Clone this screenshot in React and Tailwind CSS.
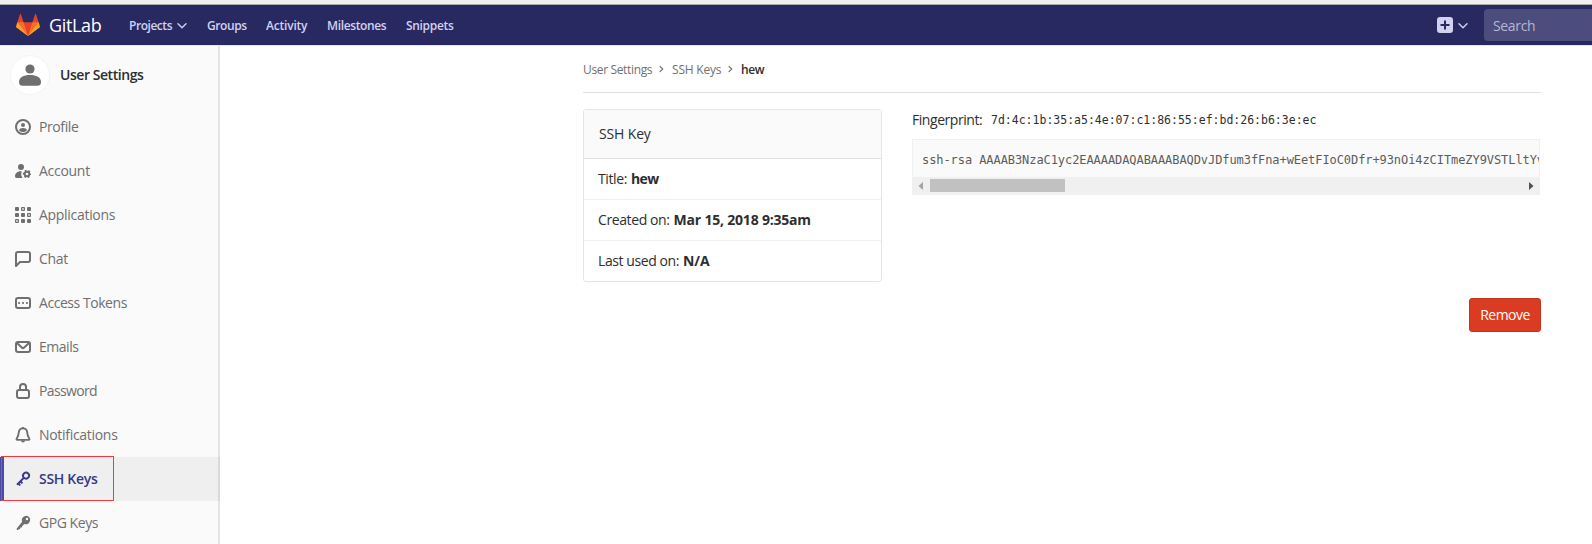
const Icon = ({ children, className = "size-4" }) => (
  <svg viewBox="0 0 16 16" className={`shrink-0 ${className}`} fill="currentColor">
    {children}
  </svg>
);

const line = { fill: "none", stroke: "currentColor", strokeWidth: 2, strokeLinejoin: "round", strokeLinecap: "round" };

const ProfileIcon = () => (
  <Icon>
    <circle cx="8" cy="8" r="7" fill="none" stroke="currentColor" strokeWidth="2" />
    <circle cx="8" cy="6" r="2" />
    <path d="M4 11.200C4.300 9.800 6 9 8 9s3.700.8 4 2.200C11.200 12.400 9.600 13 8 13s-3.200-.6-4-1.800z" />
  </Icon>
);

const AccountIcon = () => (
  <Icon>
    <circle cx="6" cy="4" r="3" />
    <path d="M6.800 8.500C5.900 8.100 4.600 8 3.700 8.400 1.500 9.100 0 10.800 0 13c0 1.500.6 2 2 2h5.600c-.9-1.200-1.500-2.600-1.400-4 .1-1 .3-1.700.6-2.500z" />
    <circle cx="12" cy="11" r="2.300" fill="none" stroke="currentColor" strokeWidth="1.900" />
    <circle cx="12" cy="11" r="3.500" fill="none" stroke="currentColor" strokeWidth="1.400" strokeDasharray="1.830 1.830" strokeDashoffset=".9" />
  </Icon>
);

const ApplicationsIcon = () => (
  <Icon>
    {[0, 1, 2].map((r) =>
      [0, 1, 2].map((c) =>
        [1, 5, 6].includes(r * 3 + c) ? (
          <rect key={c} x={c * 6 + 0.6} y={r * 6 + 0.6} width="2.800" height="2.800" rx=".4" fill="none" stroke="currentColor" strokeWidth="1.200" />
        ) : (
          <rect key={c} x={c * 6} y={r * 6} width="4" height="4" rx="1" />
        )
      )
    )}
  </Icon>
);

const ChatIcon = () => (
  <Icon>
    <path {...line} d="M3 1h10a2 2 0 0 1 2 2v6a2 2 0 0 1-2 2H5l-4 4V3a2 2 0 0 1 2-2z" />
  </Icon>
);

const TokenIcon = () => (
  <Icon>
    <rect {...line} x="1" y="3" width="14" height="10" rx="2" />
    <rect x="3.200" y="7.100" width="1.800" height="1.800" />
    <rect x="7.100" y="7.100" width="1.800" height="1.800" />
    <rect x="11" y="7.100" width="1.800" height="1.800" />
  </Icon>
);

const EmailIcon = () => (
  <Icon>
    <rect {...line} x="1" y="3" width="14" height="10" rx="2" />
    <path {...line} d="M2.500 4.500L6.800 8.500a1.700 1.700 0 0 0 2.400 0L13.500 4.500" />
  </Icon>
);

const LockIcon = () => (
  <Icon>
    <rect {...line} x="2" y="7" width="12" height="8" rx="2" />
    <path {...line} strokeLinecap="butt" d="M5 7V4a3 3 0 0 1 6 0v3" />
  </Icon>
);

const BellIcon = () => (
  <Icon>
    <path {...line} strokeWidth="1.900" d="M8 1.400c-2.400 0-4 1.700-4.200 3.900C3.600 8.400 3.200 9.600 1.700 11.700c-.4.600-.2 1.200.5 1.200h11.600c.7 0 .9-.6.5-1.200-1.500-2.100-1.900-3.300-2.100-6.400C12 3.100 10.400 1.400 8 1.400z" />
    <path d="M6 13.500h4a2 2 0 0 1-4 0zM7 0h2v2H7z" />
  </Icon>
);

const KeyIcon = () => (
  <Icon>
    <path d="M7.575 6.689a4.002 4.002 0 0 1 6.274-4.860 4 4 0 0 1-4.860 6.274l-2.210 2.210.706.708a1 1 0 1 1-1.414 1.414l-.707-.707-.707.707.707.707a1 1 0 1 1-1.414 1.414l-.707-.707a1 1 0 0 1-1.414-1.414l5.746-5.746zm2.032-.618a2 2 0 1 0 2.828-2.828A2 2 0 0 0 9.607 6.070z" />
  </Icon>
);

const SolidKeyIcon = () => (
  <Icon>
    <path fillRule="evenodd" d="M7.100 6.700A4.200 4.200 0 1 1 9.300 8.900L7.100 11.200l-.3 1.200-1.500.2-.2 1.400-1.300.3-.9.600c-.9.300-1.700-.6-1.100-1.500zM12 5.200a1.200 1.200 0 1 0 0-2.400 1.200 1.200 0 0 0 0 2.400z" />
  </Icon>
);

const Chevron = () => (
  <svg viewBox="0 0 10 6" className="h-1.5 w-2.5" {...line} strokeWidth="1.400">
    <path d="M1 .8l4 4 4-4" />
  </svg>
);

const CrumbArrow = ({ className }) => (
  <svg viewBox="0 0 5 8" className={`mb-0.5 h-2 w-[5px] ${className}`} {...line} strokeWidth="1.200">
    <path d="M1 1.300l2.700 2.700L1 6.700" />
  </svg>
);

const Logo = () => (
  <svg viewBox="0 0 36 36" className="size-6">
    <path fill="#e24329" d="M2 14l9.380 9v-9l-4-12.280c-.205-.632-1.176-.632-1.380 0z" />
    <path fill="#e24329" d="M34 14l-9.380 9v-9l4-12.280c.205-.632 1.176-.632 1.380 0z" />
    <path fill="#e24329" d="M18 34.380L3 14h30z" />
    <path fill="#fc6d26" d="M18 34.380L11.380 14H2l4 11z" />
    <path fill="#fc6d26" d="M18 34.380L24.620 14H34l-4 11z" />
    <path fill="#fca326" d="M2 14L.1 20.160c-.18.565 0 1.200.5 1.560l17.420 12.660z" />
    <path fill="#fca326" d="M34 14l1.900 6.160c.18.565 0 1.200-.5 1.560L18 34.380z" />
  </svg>
);

const items = [
  ["Profile", ProfileIcon, "tracking-[-0.4px]"],
  ["Account", AccountIcon, "tracking-[-0.28px]"],
  ["Applications", ApplicationsIcon, "tracking-[-0.3px]"],
  ["Chat", ChatIcon, "tracking-[-0.3px]"],
  ["Access Tokens", TokenIcon, "tracking-[-0.45px]"],
  ["Emails", EmailIcon, "tracking-[-0.48px]"],
  ["Password", LockIcon, "tracking-[-0.65px]"],
  ["Notifications", BellIcon, "tracking-[-0.3px]"],
  ["SSH Keys", KeyIcon, "tracking-[-0.3px]"],
  ["GPG Keys", SolidKeyIcon, "tracking-[-0.45px]"],
];

const Navbar = () => (
  <header className="flex h-[41px] shrink-0 items-center border-b border-[#e5e5e5] bg-[#292961] pl-4 text-[#d1d1f0]">
    <Logo />
    <span className="ml-[9px] w-20 text-[18px] leading-6 tracking-[-0.36px] text-white">GitLab</span>
    <nav className="flex items-center pt-0.5 text-xs font-semibold">
      <span className="w-12 tracking-[-0.46px]">Projects</span>
      <span className="w-[30px]"><Chevron /></span>
      <span className="w-[59px] tracking-[-0.4px]">Groups</span>
      <span className="w-[61px] tracking-[-0.2px]">Activity</span>
      <span className="w-[79px] tracking-[-0.36px]">Milestones</span>
      <span className="tracking-[-0.32px]">Snippets</span>
    </nav>
    <div className="ml-auto flex items-center">
      <Icon>
        <path fillRule="evenodd" d="M3 0h10a3 3 0 0 1 3 3v10a3 3 0 0 1-3 3H3a3 3 0 0 1-3-3V3a3 3 0 0 1 3-3zm4 3.500V7H3.500v2H7v3.500h2V9h3.500V7H9V3.500z" />
      </Icon>
      <span className="mr-4 ml-[5px] pt-0.5"><Chevron /></span>
      <div className="flex h-8 w-[108px] items-center rounded-l bg-[#4c4c7d] pt-0.5 pl-[9px] text-sm tracking-[-0.35px] text-[#b5b5d6]">Search</div>
    </div>
  </header>
);

const Sidebar = () => (
  <aside className="relative flex w-[220px] shrink-0 flex-col overflow-hidden bg-[#fafafa] text-[#6f6f6f] shadow-[inset_-2px_0_0_#e4e4e4]">
    <div className="flex h-[59px] shrink-0 items-center pb-0.5 pl-2.5">
      <div className="flex size-10 items-center justify-center rounded-full border border-[#f4f4f4] bg-white">
        <svg viewBox="0 0 22 22" className="size-[22px]" fill="currentColor">
          <circle cx="11" cy="5" r="4.600" />
          <path d="M0 18c0-4.500 4.500-7 11-7s11 2.500 11 7c0 2.800-1.500 3.700-3.500 3.700h-15C1.500 21.700 0 20.800 0 18z" />
        </svg>
      </div>
      <span className="ml-2.5 text-sm font-semibold tracking-[-0.45px] text-[#2e2e2e]">User Settings</span>
    </div>
    <ul>
      {items.map(([label, Glyph, tracking]) => {
        const active = label === "SSH Keys";
        return (
          <li key={label} className={`flex h-11 items-center pl-[15px] text-sm ${active ? "bg-[#efefef] font-semibold text-[#393982] shadow-[inset_4px_0_0_#4b4ba3,inset_-2px_0_0_#dadada]" : ""}`}>
            <Glyph />
            <span className={`ml-2 ${tracking}`}>{label}</span>
          </li>
        );
      })}
    </ul>
    <div className="absolute top-[410px] left-px h-[45px] w-[113px] border border-[#f8383d]" />
  </aside>
);

const Row = ({ label, value, labelClass, valueClass }) => (
  <div className="flex h-[41px] items-center border-b border-[#f0f0f0] px-[15px] last:h-10 last:border-0">
    <span className={labelClass}>{label}</span>
    <b className={`ml-1 font-bold ${valueClass}`}>{value}</b>
  </div>
);

const Content = () => (
  <main className="flex w-[1372px] flex-col pr-[51px] pl-[363px] text-sm text-[#2e2e2e]">
    <div className="flex h-[47px] items-center border-b border-[#e0e0e0] pt-px text-xs text-[#707070]">
      <span className="w-[76px] tracking-[-0.35px]">User Settings</span>
      <CrumbArrow className="mr-2" />
      <span className="w-14 tracking-[-0.2px]">SSH Keys</span>
      <CrumbArrow className="mr-2" />
      <span className="font-semibold tracking-[-0.4px] text-[#2e2e2e]">hew</span>
    </div>
    <div className="mt-4 flex gap-[30px]">
      <section className="h-[173px] w-[299px] shrink-0 rounded-[3px] border border-[#e5e5e5]">
        <h2 className="flex h-[49px] items-center border-b border-[#e0e0e0] bg-[#fafafa] pl-[15px] tracking-[-0.15px]">SSH Key</h2>
        <Row label="Title:" value="hew" labelClass="-ml-px tracking-[-0.4px]" valueClass="tracking-[-0.6px]" />
        <Row label="Created on:" value="Mar 15, 2018 9:35am" labelClass="-ml-px tracking-[-0.4px]" valueClass="tracking-[-0.2px]" />
        <Row label="Last used on:" value="N/A" labelClass="-ml-px tracking-[-0.42px]" valueClass="" />
      </section>
      <div className="min-w-0 flex-1">
        <p className="flex h-[30px] items-center pb-[9px]">
          <span className="w-[79px] tracking-[-0.45px]">Fingerprint:</span>
          <code className="pt-0.5 font-[DejaVu_Sans_Mono,monospace] text-[11.5px]">7d:4c:1b:35:a5:4e:07:c1:86:55:ef:bd:26:b6:3e:ec</code>
        </p>
        <div className="mr-px h-14 border border-[#f0f0f0] bg-[#fafafa]">
          <pre className="flex h-9 items-center overflow-hidden pt-[3px] pl-[9px] font-[DejaVu_Sans_Mono,monospace] text-xs tracking-[-0.075px] text-[#5c5c5c]">ssh-rsa AAAAB3NzaC1yc2EAAAADAQABAAABAQDvJDfum3fFna+wEetFIoC0Dfr+93nOi4zCITmeZY9VSTLltYv</pre>
          <div className="mt-px flex h-[17px] items-center bg-[#f0f0f0] px-[5px]">
            <svg viewBox="0 0 5 8" className="h-2 w-[5px]" fill="#a3a3a3"><path d="M5 0v8L.5 4z" /></svg>
            <div className="ml-[7px] h-[13px] w-[135px] bg-[#c1c1c1]" />
            <svg viewBox="0 0 5 8" className="ml-auto h-2 w-[5px]" fill="#505050"><path d="M0 0v8l4.500-4z" /></svg>
          </div>
        </div>
      </div>
    </div>
    <button className="mt-4 h-[34px] w-[72px] self-end rounded-[3px] border border-[#c0341d] bg-[#db3b21] tracking-[-0.5px] text-white">Remove</button>
  </main>
);

export default function App() {
  return (
    <div className="flex h-[544px] w-[1592px] flex-col overflow-hidden bg-white font-['Open_Sans','Noto_Sans',sans-serif]">
      <div className="h-[5px] shrink-0 border-b border-[#ababab] bg-[#f0f0f0]" />
      <Navbar />
      <div className="flex min-h-0 flex-1">
        <Sidebar />
        <Content />
      </div>
    </div>
  );
}
